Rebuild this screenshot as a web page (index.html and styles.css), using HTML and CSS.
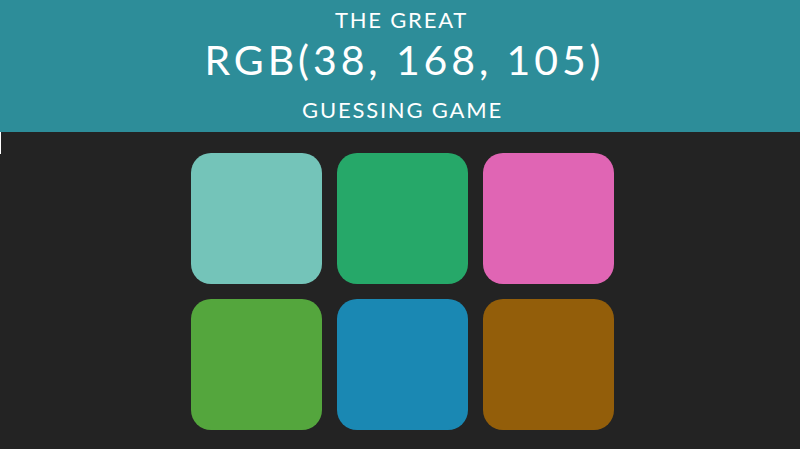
FILE: index.html
```html
<!DOCTYPE html>
<html lang="en">
<head>
<meta charset="utf-8">
<title>The Great RGB Guessing Game</title>
<link rel="stylesheet" href="styles.css">
</head>
<body>
  <h1 class="title">
    <span class="line small first">The Great</span>
    <span class="line big">RGB(38, 168, 105)</span>
    <span class="line small last">Guessing Game</span>
  </h1>
  <div class="stripe"><span class="cursor"></span></div>
  <div class="board">
    <div class="grid">
      <div class="square sq1"></div>
      <div class="square sq2"></div>
      <div class="square sq3"></div>
      <div class="square sq4"></div>
      <div class="square sq5"></div>
      <div class="square sq6"></div>
    </div>
  </div>
</body>
</html>
```
FILE: styles.css
```css
html, body {
  margin: 0;
  padding: 0;
}
body {
  background: #232323;
  font-family: Lato, "Open Sans", sans-serif;
  height: 449px;
  overflow: hidden;
}
.title {
  margin: 0;
  background: #2d8d99;
  color: #ffffff;
  font-weight: 400;
  text-align: center;
  text-transform: uppercase;
  padding: 5px 0 7px;
  display: flex;
  flex-direction: column;
  align-items: center;
}
.line {
  display: block;
}
.small {
  font-size: 22px;
  line-height: 30px;
  letter-spacing: 1.8px;
}
.first {
  padding-left: 3px;
}
.big {
  font-size: 41px;
  line-height: 50px;
  letter-spacing: 3.9px;
  padding-left: 9px;
}
.last {
  margin-top: 10px;
  padding-left: 5px;
}
.stripe {
  height: 21px;
}
.cursor {
  display: block;
  width: 1px;
  height: 22px;
  background: #ffffff;
}
.board {
  display: flex;
  justify-content: center;
  padding-left: 5px;
}
.grid {
  display: grid;
  grid-template-columns: repeat(3, 131px);
  grid-auto-rows: 131px;
  gap: 15px;
}
.square {
  border-radius: 20px;
}
.sq1 { background: #74c4b9; }
.sq2 { background: #26a869; }
.sq3 { background: #e065b4; }
.sq4 { background: #54a63d; }
.sq5 { background: #1a88b3; }
.sq6 { background: #935e0a; }
```
